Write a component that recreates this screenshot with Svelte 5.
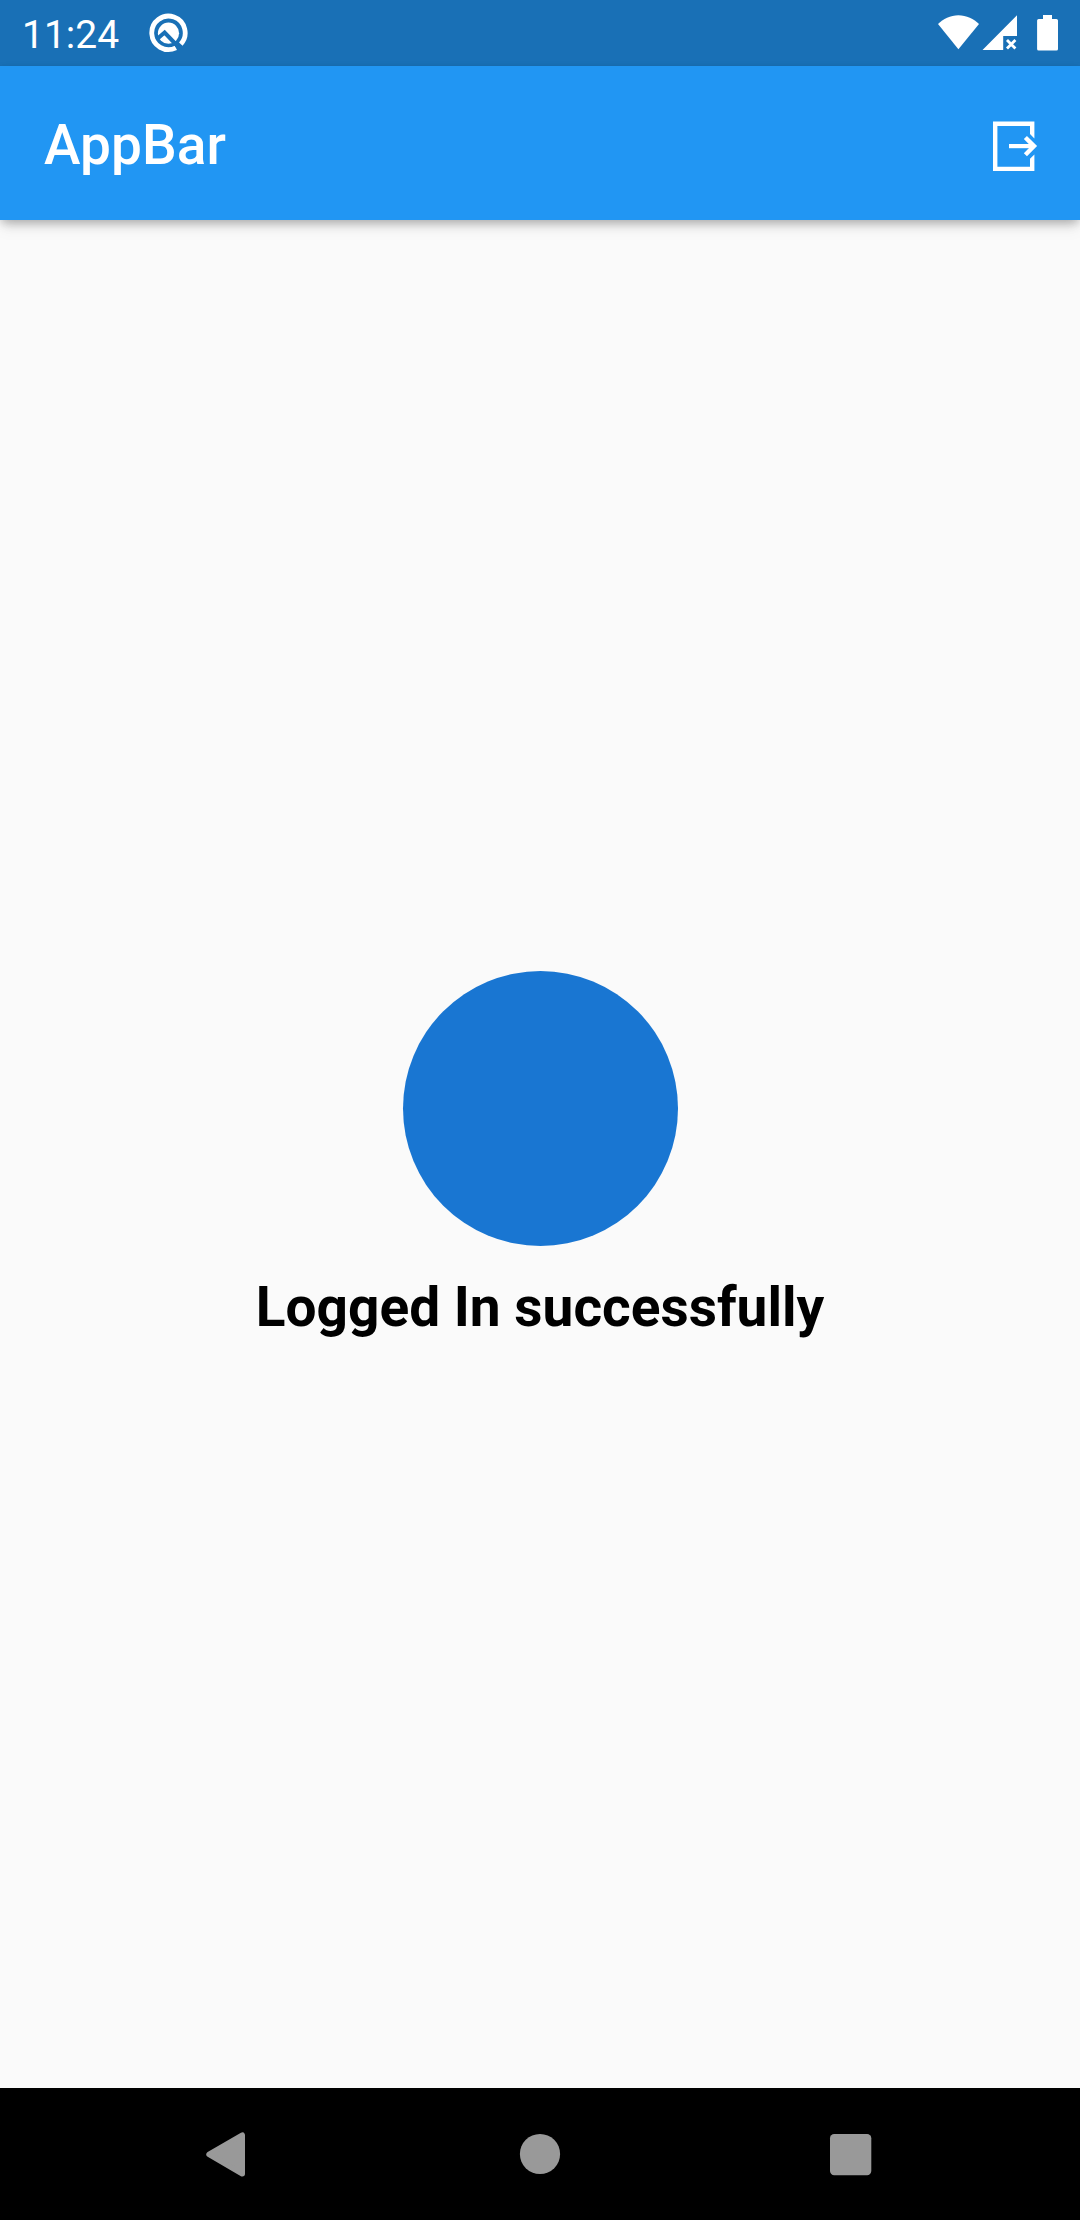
<script>
  const title = 'AppBar';
  const message = 'Logged In successfully';
  const time = '11:24';
</script>

<div class="screen">
  <div class="status">
    <span class="time">{time}</span>
    <svg class="build" width="40" height="40" viewBox="148 13 40 40" aria-hidden="true">
      <path d="M180.8 44.1A16.7 16.7 0 1 0 175.9 47.8" fill="none" stroke="#fff" stroke-width="4.8" />
      <circle cx="168.5" cy="33.2" r="10.6" fill="#fff" />
      <path d="M156.5 39.5L164.6 32.6L178 46.5" fill="none" stroke="#1970b6" stroke-width="4" />
    </svg>
    <svg class="signals" width="124" height="40" viewBox="936 13 124 40" aria-hidden="true">
      <path d="M958.4 49.3L938 24.1C943 18.8 950.5 15.2 958.4 15.2S974 18.8 979 24.1Z" fill="#fff" />
      <path d="M1017 15.3V36H1003.2V50H982.5Z" fill="#fff" />
      <path d="M1007 40L1015.4 48.6M1015.4 40L1007 48.6" stroke="#fff" stroke-width="2.8" />
      <path d="M1043 15H1052V19H1056.4Q1058 19 1058 20.6V49Q1058 50.6 1056.4 50.6H1038.7Q1037.1 50.6 1037.1 49V20.6Q1037.1 19 1038.7 19H1043Z" fill="#fff" />
    </svg>
  </div>

  <header class="bar">
    <h1>{title}</h1>
    <button aria-label="Log out">
      <svg width="48" height="54" viewBox="991 119 48 54">
        <path d="M1034.4 138.4L1030 134V126H997.4V166.7H1030V158.8L1034.4 154.4V171H993V121.4H1034.4Z" fill="#fff" />
        <path d="M1009 146.1H1034" stroke="#fff" stroke-width="4.2" fill="none" />
        <path d="M1025.4 137.5L1034 146.1L1025.4 154.7" stroke="#fff" stroke-width="4.4" fill="none" />
      </svg>
    </button>
  </header>

  <main>
    <div class="avatar"></div>
    <p>{message}</p>
  </main>

  <nav>
    <svg width="48" height="54" viewBox="202 2127 48 54" aria-label="Back">
      <path d="M209 2154.3L242.3 2135V2173.8Z" fill="#999" stroke="#999" stroke-width="5.4" stroke-linejoin="round" />
    </svg>
    <svg width="48" height="54" viewBox="514 2127 48 54" aria-label="Home">
      <circle cx="540" cy="2154" r="20.1" fill="#999" />
    </svg>
    <svg width="48" height="54" viewBox="826 2127 48 54" aria-label="Recents">
      <rect x="830" y="2134" width="41.3" height="41.3" rx="4.2" fill="#999" />
    </svg>
  </nav>
</div>

<style>
  :global(body) {
    margin: 0;
  }
  .screen {
    display: flex;
    flex-direction: column;
    width: 1080px;
    height: 2220px;
    overflow: hidden;
    background: #fafafa;
    font-family: Roboto, sans-serif;
  }
  svg {
    display: block;
    flex: none;
  }
  .status {
    display: flex;
    align-items: center;
    box-sizing: border-box;
    height: 66px;
    padding: 0 20px 0 22px;
    background: #1970b6;
    color: #fff;
  }
  .time {
    width: 126px;
    padding-top: 4px;
    font-size: 39px;
    line-height: 46px;
  }
  .signals {
    margin-left: auto;
  }
  .bar {
    display: flex;
    align-items: center;
    justify-content: space-between;
    box-sizing: border-box;
    height: 154px;
    padding: 6px 41px 0 44px;
    background: #2196f3;
    color: #fff;
    z-index: 1;
    box-shadow:
      0 5.5px 11px -2.75px rgba(0, 0, 0, 0.2),
      0 11px 13.75px 0 rgba(0, 0, 0, 0.04),
      0 2.75px 8px 0 rgba(0, 0, 0, 0.12);
  }
  h1 {
    margin: 0;
    padding-bottom: 2px;
    font-size: 55px;
    font-weight: 500;
    line-height: 64px;
    letter-spacing: 0.05px;
  }
  button {
    margin: 0;
    padding: 0;
    border: 0;
    background: none;
    height: 54px;
  }
  main {
    flex: 1;
    display: flex;
    flex-direction: column;
    align-items: center;
    justify-content: center;
    gap: 27.5px;
  }
  .avatar {
    width: 275px;
    height: 275px;
    border-radius: 50%;
    background: #1976d2;
  }
  p {
    margin: 0;
    color: #000;
    font-size: 55px;
    font-weight: 700;
    height: 64px;
    line-height: 68px;
  }
  nav {
    display: flex;
    align-items: center;
    justify-content: space-between;
    box-sizing: border-box;
    height: 132px;
    padding: 0 206px 0 202px;
    background: #000;
  }
</style>
